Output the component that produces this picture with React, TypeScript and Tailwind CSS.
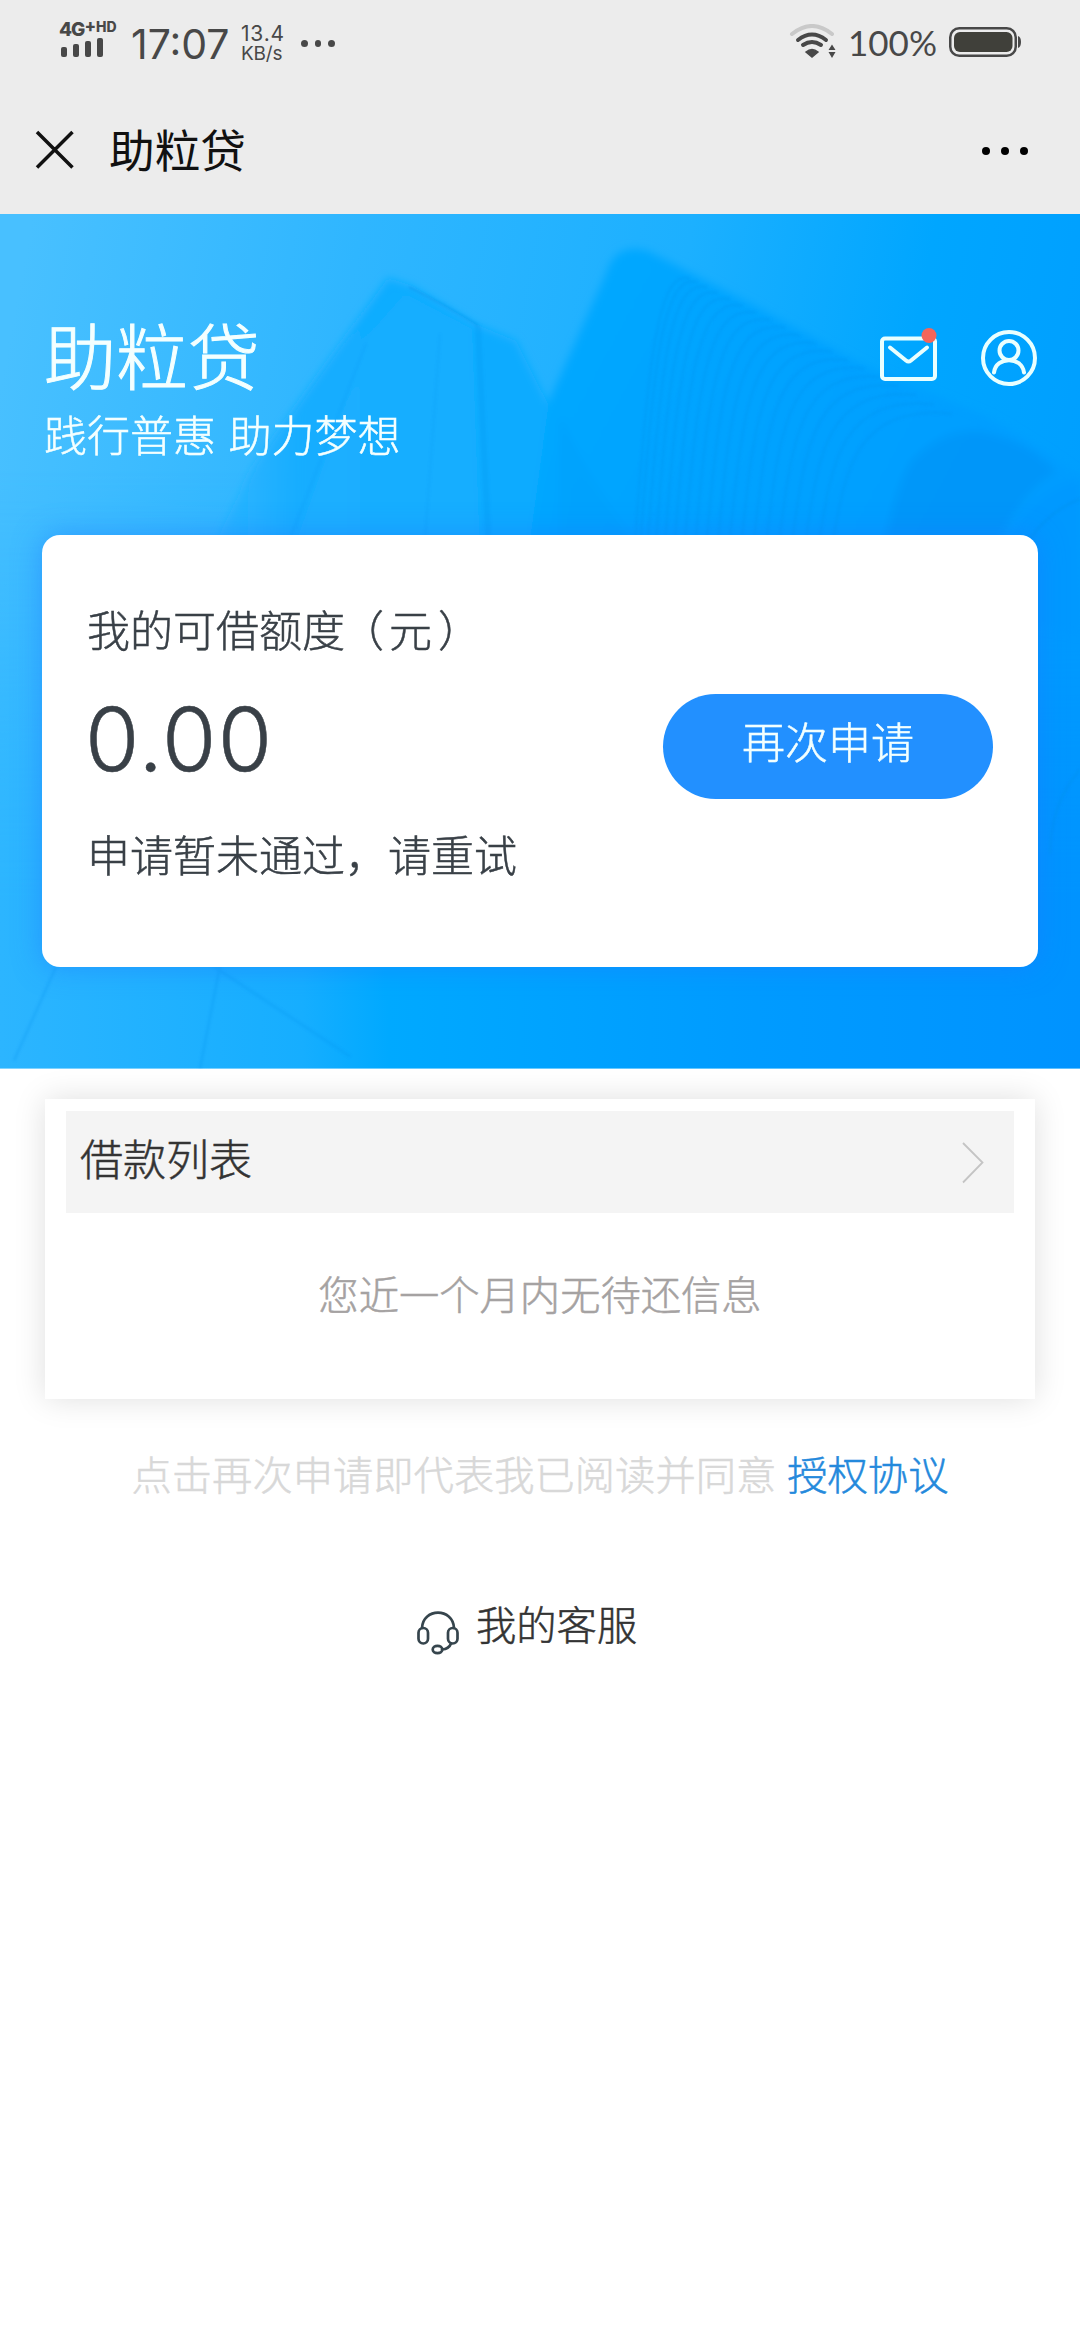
import React from "react";

const ridges = Array.from({ length: 19 }, (_, i) => {
  const t = Math.pow(i / 18, 1.25);
  const tipX = 690 + t * 262;
  const tipY = 37 + (tipX - 648) * 0.515;
  const baseX = 640 + t * 196;
  return `M${baseX - 6} 345 C${baseX + 8} ${tipY + 75} ${tipX - 30 - t * 75} ${tipY - 4} ${tipX} ${tipY + 6}`;
});

function HeroArt() {
  return (
    <svg className="absolute inset-0 h-full w-full" viewBox="0 0 1080 854" preserveAspectRatio="none">
      <defs>
        <linearGradient id="sky" x1="0" y1="0.2" x2="1" y2="0.35">
          <stop offset="0" stopColor="#48c0ff" />
          <stop offset="0.3" stopColor="#2fb6ff" />
          <stop offset="0.6" stopColor="#1cb0ff" />
          <stop offset="0.82" stopColor="#00a6ff" />
          <stop offset="1" stopColor="#009fff" />
        </linearGradient>
        <linearGradient id="floor" x1="0" y1="0" x2="1" y2="0">
          <stop offset="0" stopColor="#2cb5ff" />
          <stop offset="0.28" stopColor="#16aeff" />
          <stop offset="0.36" stopColor="#00a9ff" />
          <stop offset="0.7" stopColor="#009bff" />
          <stop offset="1" stopColor="#0093ff" />
        </linearGradient>
        <linearGradient id="fade" x1="0" y1="0" x2="0" y2="1">
          <stop offset="0.3" stopColor="#fff" stopOpacity="0" />
          <stop offset="0.8" stopColor="#fff" />
        </linearGradient>
        <mask id="lower">
          <rect width="1080" height="854" fill="url(#fade)" />
        </mask>
        <linearGradient id="towerL" x1="0" y1="0" x2="1" y2="0">
          <stop offset="0" stopColor="#22b1ff" stopOpacity="0" />
          <stop offset="0.3" stopColor="#14adff" />
          <stop offset="1" stopColor="#08abff" />
        </linearGradient>
        <linearGradient id="towerR" x1="0" y1="0" x2="1" y2="0.35">
          <stop offset="0" stopColor="#04a9ff" />
          <stop offset="0.5" stopColor="#00a3ff" />
          <stop offset="1" stopColor="#009dff" />
        </linearGradient>
        <filter id="soft" x="-10%" y="-10%" width="120%" height="120%">
          <feGaussianBlur stdDeviation="4" />
        </filter>
        <filter id="line" x="-10%" y="-10%" width="120%" height="120%">
          <feGaussianBlur stdDeviation="1.2" />
        </filter>
      </defs>
      <rect width="1080" height="854" fill="url(#sky)" />
      <rect width="1080" height="854" fill="url(#floor)" mask="url(#lower)" />
      <g filter="url(#soft)">
        <path d="M180 400 L253 253 L388 64 L412 72 L475 110 L516 127 L548 190 L585 400 Z" fill="url(#towerL)" />
        <path d="M370 120 L405 80 L472 115 L482 400 L270 400 Z" fill="#20b1ff" opacity="0.55" />
        <path d="M520 400 L549 187 L606 60 Q615 28 648 37 L757 93 L862 150 L988 203 Q1040 232 1080 262 L1080 400 Z" fill="url(#towerR)" />
        <path d="M560 200 Q600 300 700 400 L560 400 Z" fill="#009dfa" opacity="0.35" />
        <path d="M876 400 Q885 290 911 247 Q945 212 985 218 Q1030 228 1056 258 Q1005 285 975 400 Z" fill="#008ff4" opacity="0.55" />
        <path d="M985 400 C1000 320 1030 275 1080 265 L1080 420 Z" fill="#0099ff" />
      </g>
      <g filter="url(#line)" fill="none" stroke="#0092ec">
        <path d="M409 73 Q440 88 478 111" strokeWidth="3" opacity="0.35" />
        <path d="M478 111 L489 340" strokeWidth="6" opacity="0.2" />
        <path d="M366 130 L284 340 M440 120 L424 340" strokeWidth="2" opacity="0.15" />
        <path d="M66 730 L14 846 M230 700 L200 854 M150 710 L350 842" strokeWidth="3" opacity="0.2" />
        <g strokeWidth="3" opacity="0.24">
          {ridges.map((d) => (
            <path key={d} d={d} />
          ))}
        </g>
        <path d="M1080 285 Q1040 300 1018 345 M1080 555 Q1050 590 1050 640" strokeWidth="3" opacity="0.3" />
      </g>
    </svg>
  );
}

function StatusBar() {
  return (
    <div className="flex h-[86px] items-start justify-between pl-[59px] pr-[59px] text-[#484848]">
      <div className="flex items-start">
        <div className="mt-[20px] w-[60px]">
          <div className="flex h-[17px] items-start whitespace-nowrap font-extrabold leading-none">
            <span className="text-[19px] leading-[20px] tracking-[-1px]">4G</span>
            <span className="text-[17px] leading-[12px]">+</span>
            <span className="text-[14px] leading-[14px]">HD</span>
          </div>
          <div className="ml-[2px] flex h-[20px] items-end gap-[6px]">
            <i className="h-[10px] w-[6px] rounded-[2px] bg-[#484848]" />
            <i className="h-[13px] w-[6px] rounded-[2px] bg-[#484848]" />
            <i className="h-[16px] w-[6px] rounded-[2px] bg-[#484848]" />
            <i className="h-[19px] w-[6px] rounded-[2px] bg-[#484848]" />
          </div>
        </div>
        <div className="ml-[12px] mt-[24px] w-[110px] whitespace-nowrap text-[41px] leading-[40px]">17:07</div>
        <div className="mt-[24px] w-[46px] whitespace-nowrap text-[20px] leading-[20px]">
          <div className="text-[21px] tracking-[0.8px]">13.4</div>
          <div className="text-[19px] tracking-[-0.2px]">KB/s</div>
        </div>
        <div className="ml-[14px] mt-[40px] flex gap-[7px]">
          <i className="size-[6.5px] rounded-full bg-[#484848]" />
          <i className="size-[6.5px] rounded-full bg-[#484848]" />
          <i className="size-[6.5px] rounded-full bg-[#484848]" />
        </div>
      </div>
      <div className="flex items-start">
        <svg className="mt-[24px] h-[36px] w-[48px]" viewBox="0 0 48 36" fill="none" strokeWidth="4" strokeLinecap="round">
          <path d="M3 10 Q23 -6 43 10" stroke="#c9c9c9" />
          <path d="M9 16 Q23 5 37 16" stroke="#484848" />
          <path d="M14 21 Q23 15 32 21" stroke="#484848" />
          <path d="M17 28 Q23 23 29 28 L23 33 Z" fill="#484848" stroke="#484848" strokeWidth="1.5" />
          <path d="M43 20.5 L46.5 26 H39.500 Z M43 34 L46.500 28 H39.500 Z" fill="#484848" />
        </svg>
        <div className="ml-[11px] mt-[24px] w-[92px] whitespace-nowrap font-['Lato'] text-[35px] leading-[36px]">100%</div>
        <svg className="ml-[9px] mt-[27px] h-[30px] w-[72px]" viewBox="0 0 72 30">
          <rect x="1.25" y="1.250" width="65.500" height="27.500" rx="9" fill="none" stroke="#484848" strokeWidth="2.500" />
          <rect x="5" y="5" width="58.500" height="20" rx="6" fill="#40403a" />
          <path d="M69 9 Q72 10 72 15 Q72 20 69 21 Z" fill="#484848" />
        </svg>
      </div>
    </div>
  );
}

export default function App() {
  return (
    <div className="h-[2340px] w-[1080px] overflow-hidden bg-white font-['Noto_Sans_CJK_SC','Noto_Sans',sans-serif] font-light [-webkit-text-stroke-width:0.5px]">
      <header className="h-[214px] bg-[#ececec] [-webkit-text-stroke-width:0px]">
        <div className="font-['Inter',sans-serif] font-normal">
          <StatusBar />
        </div>
        <div className="flex h-[128px] items-start pl-[35px] pr-[52px] pt-[38px] text-[#111]">
          <svg className="mt-[6px] size-[40px]" viewBox="0 0 40 40" fill="none" stroke="#111" strokeWidth="3.500">
            <path d="M2 2 L37.500 37.500 M37.500 2 L2 37.500" />
          </svg>
          <h1 className="ml-[34px] text-[45.700px] font-normal leading-[48px]">助粒贷</h1>
          <div className="ml-auto mt-[23px] flex gap-[11px]">
            <i className="size-[8px] rounded-full bg-black" />
            <i className="size-[8px] rounded-full bg-black" />
            <i className="size-[8px] rounded-full bg-black" />
          </div>
        </div>
      </header>

      <section className="relative h-[854.500px] overflow-hidden">
        <HeroArt />
        <div className="relative flex items-start justify-between pl-[44px] pr-[43px] pt-[103px] text-[#f4ffff]">
          <div>
            <h2 className="text-[72px] leading-[72px] [-webkit-text-stroke-width:1px]">助粒贷</h2>
            <p className="mt-[22px] text-[43px] leading-[44px] [word-spacing:3px]">践行普惠 助力梦想</p>
          </div>
          <div className="mt-[9px] flex gap-[43px]">
            <svg className="h-[60px] w-[60px]" viewBox="0 0 60 60" fill="none" stroke="#e9ffff" strokeWidth="4" strokeLinecap="round" strokeLinejoin="round">
              <rect x="4" y="12.500" width="53" height="40.500" rx="3" />
              <path d="M12 21.500 L28 34.500 Q30.500 36.500 33 34.500 L49 21.500" />
              <circle cx="51" cy="9.500" r="7.500" fill="#f5655b" stroke="none" />
            </svg>
            <svg className="mt-[4px] size-[56px]" viewBox="0 0 56 56" fill="none" stroke="#e9ffff" strokeWidth="4" strokeLinecap="round">
              <circle cx="28" cy="28" r="26" />
              <circle cx="28" cy="20.500" r="9.500" />
              <path d="M13 42.500 C15 26 41 26 43 42.500" />
            </svg>
          </div>
        </div>

        <div className="relative mx-[42px] mt-[80px] h-[432px] rounded-[18px] bg-white pl-[45px] pr-[45px] pt-[71px] text-[#394047] shadow-[0_0_28px_rgba(30,120,255,0.5)]">
          <p className="text-[43px] leading-[44px]">
            我的可借额度<span className="-ml-[4px] mr-[5px]">（</span>元<span className="ml-[6px]">）</span>
          </p>
          <div className="mt-[44px] flex h-[105px] items-start justify-between">
            <span className="-ml-[2px] font-['Inter',sans-serif] text-[88px] font-light leading-[90px] tracking-[1.2px]">0.00</span>
            <button className="flex h-[105px] w-[330px] justify-center rounded-full bg-[#2290ff] pt-[24px] text-[43px] font-light leading-[44px] text-[#f2ffff]">
              再次申请
            </button>
          </div>
          <p className="mt-[32px] text-[43px] leading-[44px]">申请暂未通过，请重试</p>
        </div>
      </section>

      <section className="mx-[45px] mt-[30.500px] h-[300px] bg-white px-[21px] pt-[12px] shadow-[0_0_30px_rgba(0,0,0,0.13)]">
        <div className="flex h-[102px] justify-between bg-[#f4f4f4] pl-[14px] pr-[30px] pt-[24px]">
          <h3 className="text-[43px] leading-[44px] text-[#333]">借款列表</h3>
          <svg className="mt-[7px] h-[42px] w-[22px]" viewBox="0 0 22 42" fill="none" stroke="#c4c4c4" strokeWidth="1.800">
            <path d="M1 1 L20.500 20.500 L1 40.500" />
          </svg>
        </div>
        <p className="mt-[58px] text-center text-[40.300px] leading-[44px] text-[#a5a2a2]">您近一个月内无待还信息</p>
      </section>

      <p className="mt-[52px] flex justify-center gap-[11px] whitespace-nowrap text-[40.300px] leading-[44px] text-[#d8d8d8]">
        <span>点击再次申请即代表我已阅读并同意</span>
        <a className="text-[#2489dc]">授权协议</a>
      </p>

      <div className="mt-[106px] flex items-start pl-[416px] text-[#333]">
        <svg className="mt-[10px] h-[44px] w-[44px]" viewBox="0 0 44 44" fill="none" stroke="#36454d" strokeWidth="2.700" strokeLinecap="round">
          <path d="M6 17 C7 -3.500 37 -3.500 38 17" />
          <rect x="2.500" y="17" width="9.500" height="15.500" rx="4.750" />
          <rect x="32" y="17" width="9.500" height="15.500" rx="4.750" />
          <path d="M35 32.500 Q33 38 26 38.500" />
          <ellipse cx="21.500" cy="38.500" rx="4.800" ry="3.600" />
        </svg>
        <span className="ml-[16px] text-[40.300px] leading-[44px]">我的客服</span>
      </div>
    </div>
  );
}
